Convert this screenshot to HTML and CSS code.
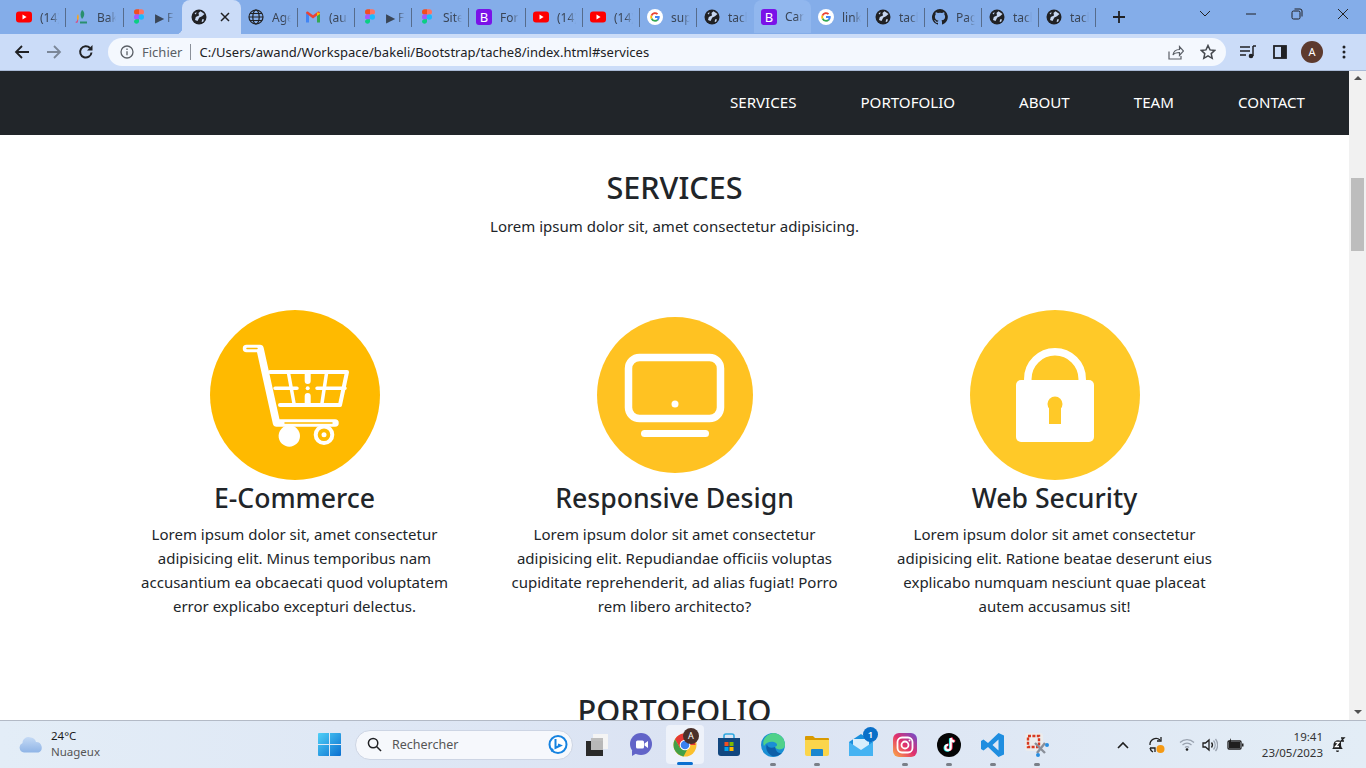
FILE: index.html
```html
<!DOCTYPE html>
<html lang="fr">
<head>
<meta charset="utf-8">
<title>tache8</title>
<link rel="stylesheet" href="styles.css">
</head>
<body>
<svg class="defs" width="0" height="0" aria-hidden="true">
  <symbol id="i-yt" viewBox="0 0 16 16"><rect y="2.5" width="16" height="11" rx="3" fill="#f00"/><path d="M6.5 5.6 10.6 8l-4.1 2.4z" fill="#fff"/></symbol>
  <symbol id="i-earth" viewBox="0 0 16 16"><circle cx="8" cy="8" r="7.5" fill="#202124"/><path d="M9.500 2.200 13.500 5 11 7.200 8.300 8.500 6.500 12 4 11 4.800 8 8 6.500 7.500 4zM3.500 4.500 5.500 3 5 5.500zM11.500 10l1.500.5-1 2.500-1.500-.5z" fill="#c6d6f0"/></symbol>
  <symbol id="i-world" viewBox="0 0 16 16"><g fill="none" stroke="#202124" stroke-width="1.2"><circle cx="8" cy="8" r="7"/><ellipse cx="8" cy="8" rx="3.2" ry="7"/><path d="M1 8h14M2 4.5h12M2 11.5h12"/></g></symbol>
  <symbol id="i-figma" viewBox="0 0 16 16"><path d="M3 3a2.7 2.7 0 0 1 2.700-2.700H8V5.700H5.700A2.700 2.700 0 0 1 3 3z" fill="#f24e1e"/><path d="M8 .3h2.300a2.700 2.700 0 0 1 0 5.400H8z" fill="#ff7262"/><path d="M3 8a2.700 2.700 0 0 1 2.700-2.700H8v5.400H5.700A2.700 2.700 0 0 1 3 8z" fill="#a259ff"/><circle cx="10.300" cy="8" r="2.700" fill="#1abcfe"/><path d="M3 13a2.700 2.700 0 0 1 2.700-2.700H8V13a2.700 2.700 0 0 1-5 0z" fill="#0acf83"/></symbol>
  <symbol id="i-gmail" viewBox="0 0 16 16"><path d="M1 13.500V4l3 2v7.500z" fill="#4285f4"/><path d="M12 13.500V6l3-2v9.500z" fill="#34a853"/><path d="M1 4.200c0-1.500 1.500-2 2.500-1.300L8 6.300l4.500-3.400c1-.7 2.500-.2 2.500 1.300L12 6.500 8 9.500 4 6.500z" fill="#ea4335"/><path d="M12 3.300l3 1V5l-3 2z" fill="#fbbc04"/></symbol>
  <symbol id="i-g" viewBox="0 0 16 16"><circle cx="8" cy="8" r="8" fill="#fff"/><path d="M12.700 8.100c0-.4 0-.7-.1-1H8v1.900h2.600a2.300 2.300 0 0 1-1 1.500l1.600 1.200c.9-.9 1.500-2.100 1.500-3.600z" fill="#4285f4"/><path d="M8 12.800c1.300 0 2.400-.4 3.200-1.200l-1.600-1.200c-.4.300-1 .5-1.600.5-1.200 0-2.300-.8-2.700-2L3.700 10.100A4.800 4.800 0 0 0 8 12.800z" fill="#34a853"/><path d="M5.300 8.900a3 3 0 0 1 0-1.800L3.700 5.900a4.800 4.800 0 0 0 0 4.200z" fill="#fbbc05"/><path d="M8 5.100c.7 0 1.300.2 1.800.7l1.400-1.400A4.800 4.800 0 0 0 3.700 5.900l1.600 1.200C5.700 5.900 6.800 5.100 8 5.100z" fill="#ea4335"/></symbol>
  <symbol id="i-gh" viewBox="0 0 16 16"><path fill="#202124" d="M8 0a8 8 0 0 0-2.500 15.600c.4.100.5-.2.500-.4v-1.400c-2.200.5-2.700-1-2.700-1-.4-.9-.9-1.200-.9-1.200-.7-.5.100-.5.100-.5.800.1 1.200.8 1.200.8.700 1.200 1.900.9 2.300.7.100-.5.300-.9.500-1.100-1.800-.2-3.600-.9-3.600-4 0-.9.300-1.600.8-2.100-.1-.2-.4-1 .1-2.100 0 0 .7-.2 2.200.8a7.600 7.600 0 0 1 4 0c1.500-1 2.200-.8 2.200-.8.400 1.100.2 1.900.1 2.100.5.600.8 1.300.8 2.100 0 3.100-1.900 3.700-3.700 3.900.3.300.6.800.6 1.500v2.200c0 .2.100.5.600.4A8 8 0 0 0 8 0z"/></symbol>
  <symbol id="i-bakeli" viewBox="0 0 16 16"><path d="M9 1c3 2 3 6 0 9-2-3-2-6 0-9z" fill="#2a8f6e"/><path d="M5 5c1 2 1 4 0 7-1.500-2-1.500-5 0-7z" fill="#f5a623"/><path d="M2 13c2 0 2-2 3-3 0 2 0 3-1 4z" fill="#e0457b"/><path d="M7 12.500h7v2H7z" fill="#2a8f6e"/></symbol>
</svg>

<div class="tabstrip">
  <div class="tab"><svg class="fav"><use href="#i-yt"/></svg><span class="tab-title">(14)</span></div>
  <div class="tab tab-wide"><svg class="fav"><use href="#i-bakeli"/></svg><span class="tab-title">Bak</span></div>
  <div class="tab tab-wide tab-nosep"><svg class="fav"><use href="#i-figma"/></svg><span class="tab-title">▶ F</span></div>
  <div class="tab tab-active"><svg class="fav"><use href="#i-earth"/></svg><svg class="tab-close" viewBox="0 0 10 10"><path d="M1 1l8 8M9 1l-8 8"/></svg></div>
  <div class="tab"><svg class="fav"><use href="#i-world"/></svg><span class="tab-title">Age</span></div>
  <div class="tab"><svg class="fav"><use href="#i-gmail"/></svg><span class="tab-title">(au</span></div>
  <div class="tab"><svg class="fav"><use href="#i-figma"/></svg><span class="tab-title">▶ F</span></div>
  <div class="tab"><svg class="fav"><use href="#i-figma"/></svg><span class="tab-title">Site</span></div>
  <div class="tab"><div class="fav fav-b">B</div><span class="tab-title">For</span></div>
  <div class="tab"><svg class="fav"><use href="#i-yt"/></svg><span class="tab-title">(14)</span></div>
  <div class="tab"><svg class="fav"><use href="#i-yt"/></svg><span class="tab-title">(14)</span></div>
  <div class="tab"><svg class="fav"><use href="#i-g"/></svg><span class="tab-title">sup</span></div>
  <div class="tab tab-nosep"><svg class="fav"><use href="#i-earth"/></svg><span class="tab-title">tach</span></div>
  <div class="tab tab-hover"><div class="fav fav-b">B</div><span class="tab-title">Car</span></div>
  <div class="tab"><svg class="fav"><use href="#i-g"/></svg><span class="tab-title">link</span></div>
  <div class="tab"><svg class="fav"><use href="#i-earth"/></svg><span class="tab-title">tach</span></div>
  <div class="tab"><svg class="fav"><use href="#i-gh"/></svg><span class="tab-title">Pag</span></div>
  <div class="tab"><svg class="fav"><use href="#i-earth"/></svg><span class="tab-title">tach</span></div>
  <div class="tab"><svg class="fav"><use href="#i-earth"/></svg><span class="tab-title">tach</span></div>
  <svg class="newtab" viewBox="0 0 12 12"><path d="M6 0v12M0 6h12"/></svg>
  <svg class="win win-chev" viewBox="0 0 12 8"><path d="M1 1l5 5 5-5"/></svg>
  <svg class="win win-min" viewBox="0 0 12 12"><path d="M1 6h10"/></svg>
  <svg class="win win-max" viewBox="0 0 12 12"><rect x="1" y="3" width="8" height="8" rx="1.500"/><path d="M3.500 1H9a2 2 0 0 1 2 2v5.500"/></svg>
  <svg class="win win-close" viewBox="0 0 12 12"><path d="M1 1l10 10M11 1L1 11"/></svg>
</div>

<div class="toolbar">
  <svg class="tool tool-back" viewBox="0 0 16 16"><path d="M15 8H2M8 2 2 8l6 6"/></svg>
  <svg class="tool tool-fwd" viewBox="0 0 16 16"><path d="M1 8h13M8 2l6 6-6 6"/></svg>
  <svg class="tool tool-reload" viewBox="0 0 16 16"><path d="M13.500 8.500A5.700 5.700 0 1 1 12 4"/><path class="solid" d="M14.500 1v5.500H9z"/></svg>
  <div class="omnibox">
    <svg class="info" viewBox="0 0 14 14"><circle cx="7" cy="7" r="6"/><path d="M7 6.200v4M7 3.400v1.500"/></svg>
    <span class="scheme">Fichier</span>
    <span class="divider"></span>
    <span class="url">C:/Users/awand/Workspace/bakeli/Bootstrap/tache8/index.html#services</span>
    <svg class="omni-ic omni-share" viewBox="0 0 16 16"><path d="M1 7.500V15h12v-3"/><path d="M5 11c.5-3.500 3-5.500 6.500-5.500V2.500L15.500 7l-4 4.500V8.500C9 8.500 6.500 9 5 11z"/></svg>
    <svg class="omni-ic omni-star" viewBox="0 0 16 16"><path d="M8 1.500l2 4.400 4.800.5-3.600 3.200 1 4.700L8 11.900l-4.200 2.400 1-4.700L1.200 6.400 6 5.900z"/></svg>
  </div>
  <svg class="tool tool-media" viewBox="0 0 16 16"><path d="M0 3h10M0 7h10M0 11h6"/><path d="M13 2v10"/><circle class="solid" cx="11" cy="12" r="2.300"/><path d="M13 2h3"/></svg>
  <svg class="tool tool-side" viewBox="0 0 14 14"><rect x="1" y="1" width="12" height="12"/><rect class="solid" x="8" y="1" width="5" height="12"/></svg>
  <div class="avatar">A</div>
  <svg class="kebab" viewBox="0 0 4 14"><circle cx="2" cy="2" r="1.500"/><circle cx="2" cy="7" r="1.500"/><circle cx="2" cy="12" r="1.500"/></svg>
</div>

<div class="viewport">
  <div class="page">
    <nav class="navbar">
      <a class="nav-link">SERVICES</a>
      <a class="nav-link">PORTOFOLIO</a>
      <a class="nav-link">ABOUT</a>
      <a class="nav-link">TEAM</a>
      <a class="nav-link">CONTACT</a>
    </nav>
    <section class="services">
      <h2 class="section-title">SERVICES</h2>
      <p class="section-sub">Lorem ipsum dolor sit, amet consectetur adipisicing.</p>
      <div class="cards">
        <article class="card">
          <div class="icon-wrap">
            <svg class="icon-disc" viewBox="0 0 170 170">
              <circle class="c-cart" cx="85" cy="85" r="85"/>
              <g class="stroke-w">
                <path class="s7" d="M36.500 38.500H50L66.500 113H125"/>
                <path class="s4" d="M60 62H137L130 95H70"/>
                <path class="s3" d="M65 78.300H87M107 78.300H135M78.300 62l6 33M116.700 62l-5 33"/>
                <path class="s6" d="M97.700 63V71M97.700 86V94"/>
                <circle class="s4" cx="114" cy="124.700" r="8.300"/>
              </g>
              <g class="stroke-cart">
                <path d="M37 38.500H47"/>
                <path d="M75 113H122"/>
              </g>
              <circle class="fill-w" cx="79.300" cy="126" r="10.700"/>
              <circle class="fill-w" cx="114" cy="124.700" r="2.500"/>
              <circle class="fill-w" cx="97.700" cy="78.300" r="2"/>
            </svg>
          </div>
          <h3 class="card-title">E-Commerce</h3>
          <p class="card-text">Lorem ipsum dolor sit, amet consectetur adipisicing elit. Minus temporibus nam accusantium ea obcaecati quod voluptatem error explicabo excepturi delectus.</p>
        </article>
        <article class="card">
          <div class="icon-wrap">
            <svg class="icon-disc icon-small" viewBox="0 0 156 156">
              <circle class="c-screen" cx="78" cy="78" r="78"/>
              <g class="stroke-w">
                <rect class="s7" x="31.500" y="40.500" width="92" height="61" rx="11"/>
              </g>
              <circle class="fill-w" cx="78" cy="87" r="3.500"/>
              <rect class="fill-w" x="44" y="113" width="68" height="7" rx="3.500"/>
            </svg>
          </div>
          <h3 class="card-title">Responsive Design</h3>
          <p class="card-text">Lorem ipsum dolor sit amet consectetur adipisicing elit. Repudiandae officiis voluptas cupiditate reprehenderit, ad alias fugiat! Porro rem libero architecto?</p>
        </article>
        <article class="card">
          <div class="icon-wrap">
            <svg class="icon-disc" viewBox="0 0 170 170">
              <circle class="c-lock" cx="85" cy="85" r="85"/>
              <g class="stroke-w"><path class="s7" d="M57.800 69A27.200 27.200 0 0 1 112.200 69V72M57.800 69V72"/></g>
              <rect class="fill-w" x="46" y="70" width="78" height="62" rx="5"/>
              <circle class="c-lock" cx="85" cy="94" r="7.500"/>
              <rect class="c-lock" x="79" y="94" width="12" height="20"/>
            </svg>
          </div>
          <h3 class="card-title">Web Security</h3>
          <p class="card-text">Lorem ipsum dolor sit amet consectetur adipisicing elit. Ratione beatae deserunt eius explicabo numquam nesciunt quae placeat autem accusamus sit!</p>
        </article>
      </div>
    </section>
    <section class="portfolio">
      <h2 class="section-title">PORTOFOLIO</h2>
    </section>
  </div>
  <div class="scrollbar">
    <span class="arrow-up"></span>
    <span class="thumb"></span>
    <span class="arrow-down"></span>
  </div>
</div>

<footer class="taskbar">
  <div class="weather">
    <svg class="cloud" viewBox="0 0 26 17"><defs><linearGradient id="gc" x1="0" y1="0" x2="0" y2="1"><stop offset="0" stop-color="#c5daf5"/><stop offset="1" stop-color="#8fb4e6"/></linearGradient></defs><path d="M6 16.500A5 5 0 0 1 4.500 7 6 6 0 0 1 13 1.500a6 6 0 0 1 5 4.500 5.500 5.500 0 0 1 2.500 10.500z" fill="url(#gc)"/></svg>
    <div class="weather-text"><span class="temp">24°C</span><span class="cond">Nuageux</span></div>
  </div>
  <svg class="winlogo" viewBox="0 0 23 23"><defs><linearGradient id="gw" x1="0" y1="0" x2="1" y2="1"><stop offset="0" stop-color="#4fd0f7"/><stop offset="1" stop-color="#0a6fd0"/></linearGradient></defs><path d="M0 1a1 1 0 0 1 1-1h10v11H0zM12 0h10a1 1 0 0 1 1 1v10H12zM0 12h11v11H1a1 1 0 0 1-1-1zM12 12h11v10a1 1 0 0 1-1 1H12z" fill="url(#gw)"/></svg>
  <div class="search">
    <svg class="search-ic" viewBox="0 0 16 16"><circle cx="6.500" cy="6.500" r="5"/><path d="M10.200 10.200 15 15"/></svg>
    <span class="search-text">Rechercher</span>
    <svg class="bing" viewBox="0 0 20 20"><circle cx="10" cy="9.500" r="8.500" fill="#fff" stroke="#1683e0" stroke-width="2"/><path d="M7.500 4v9l5-2.500-2.500-1" fill="none" stroke="#1683e0" stroke-width="2"/><path d="M3 17l3-2-2-2z" fill="#1683e0"/></svg>
  </div>
  <div class="dock">
    <div class="dock-item"><svg class="dock-ic" viewBox="0 0 24 24"><rect x="8" y="1" width="15" height="15" fill="#f4f4f4"/><rect x="6" y="5" width="12" height="12" fill="#bdbdbd"/><rect x="1" y="8" width="17" height="15" fill="#2a2a2a"/><rect x="6" y="8" width="12" height="9" fill="#b8b8b8"/></svg></div>
    <div class="dock-item"><svg class="dock-ic" viewBox="0 0 24 24"><circle cx="12" cy="11" r="11" fill="#6264c8"/><path d="M3 17v6l5-3z" fill="#6264c8"/><rect x="7" y="7.500" width="8" height="8" rx="1.500" fill="#fff"/><path d="M15.500 10.500 19 8v7l-3.500-2.500z" fill="#fff"/></svg></div>
    <div class="dock-item dock-active">
      <svg class="dock-ic" viewBox="0 0 24 24"><circle cx="12" cy="12" r="11.500" fill="#fbc02d"/><path d="M12 .5A11.500 11.500 0 0 0 2 6.300L7 15l5-3h10.500A11.500 11.500 0 0 0 12 .5z" fill="#e53935"/><path d="M2 6.300A11.500 11.500 0 0 0 10.500 23.400L15 15 7 15z" fill="#43a047"/><circle cx="12" cy="12" r="5.300" fill="#fff"/><circle cx="12" cy="12" r="4.300" fill="#3b82f0"/></svg>
      <span class="chrome-badge">A</span><span class="pill"></span>
    </div>
    <div class="dock-item"><svg class="dock-ic" viewBox="0 0 24 24"><path d="M7 6V3a2 2 0 0 1 2-2h6a2 2 0 0 1 2 2v3" fill="none" stroke="#2fa8e0" stroke-width="1.600"/><path d="M1 5h22v15a3 3 0 0 1-3 3H4a3 3 0 0 1-3-3z" fill="#12477f"/><rect x="7.500" y="9" width="4" height="4" fill="#f25022"/><rect x="12.500" y="9" width="4" height="4" fill="#7fba00"/><rect x="7.500" y="14" width="4" height="4" fill="#00a4ef"/><rect x="12.500" y="14" width="4" height="4" fill="#ffb900"/></svg></div>
    <div class="dock-item has-dot"><svg class="dock-ic" viewBox="0 0 24 24"><circle cx="12" cy="12" r="12" fill="#1a8fd4"/><path d="M12 0a12 12 0 0 1 12 12c0 2-1 3-3 4-3 1-6 0-7-2 2-1 3-2 1-4C12 8 6 8 3 13 1 9 3 2 12 0z" fill="#4fd18a"/><path d="M14 14c-4 2-8 0-8-3-2 4 0 9 5 12 4 1 8-1 10-3-3 1-6-1-7-6z" fill="#0d5fa8"/></svg></div>
    <div class="dock-item has-dot"><svg class="dock-ic" viewBox="0 0 24 24"><path d="M0 4a1 1 0 0 1 1-1h7l2 2h13a1 1 0 0 1 1 1v4H0z" fill="#d99a00"/><path d="M0 7h24v14a2 2 0 0 1-2 2H2a2 2 0 0 1-2-2z" fill="#fbd54b"/><path d="M6 17a1 1 0 0 1 1-1h10a1 1 0 0 1 1 1v6H6z" fill="#1a86d0"/></svg></div>
    <div class="dock-item"><svg class="dock-ic" viewBox="0 0 24 24"><path d="M0 9 12 1l12 8v14H0z" fill="#1a8fdc"/><path d="M4 6h16v8l-8 4-8-4z" fill="#d8eefc"/><path d="M0 9l12 8 12-8v14H0z" fill="#45b3f2"/></svg><span class="mail-badge">1</span></div>
    <div class="dock-item has-dot"><svg class="dock-ic" viewBox="0 0 24 24"><defs><linearGradient id="gi" x1="0" y1="1" x2="1" y2="0"><stop offset="0" stop-color="#fdb045"/><stop offset=".5" stop-color="#e1306c"/><stop offset="1" stop-color="#6a4fd0"/></linearGradient></defs><rect width="24" height="24" rx="6" fill="url(#gi)"/><rect x="4.500" y="4.500" width="15" height="15" rx="4.500" fill="none" stroke="#fff" stroke-width="1.800"/><circle cx="12" cy="12" r="3.500" fill="none" stroke="#fff" stroke-width="1.800"/><circle cx="16.500" cy="7.500" r="1" fill="#fff"/></svg></div>
    <div class="dock-item has-dot"><svg class="dock-ic" viewBox="0 0 24 24"><circle cx="12" cy="12" r="12" fill="#050505"/><path d="M13.800 5v9.500a2.700 2.700 0 1 1-2.700-2.700" fill="none" stroke="#25f4ee" stroke-width="2.200" transform="translate(-.8 .5)"/><path d="M13.800 5c.3 2 1.500 3.300 3.600 3.500" fill="none" stroke="#25f4ee" stroke-width="2.200" transform="translate(-.8 .5)"/><path d="M13.800 5v9.500a2.700 2.700 0 1 1-2.700-2.700" fill="none" stroke="#fe2c55" stroke-width="2.200" transform="translate(.8 -.3)"/><path d="M13.800 5c.3 2 1.500 3.300 3.600 3.500" fill="none" stroke="#fe2c55" stroke-width="2.200" transform="translate(.8 -.3)"/><path d="M13.800 5v9.500a2.700 2.700 0 1 1-2.700-2.700M13.800 5c.3 2 1.500 3.300 3.600 3.500" fill="none" stroke="#fff" stroke-width="2"/></svg></div>
    <div class="dock-item has-dot"><svg class="dock-ic" viewBox="0 0 24 24"><path d="M17.500 0 23 2.500v19L17.500 24 7 14l-4.500 3.500L0 16v-8l2.500-1.500L7 10zM17.500 6.500 11.500 12l6 5.500z" fill="#1f8ee0"/></svg></div>
    <div class="dock-item has-dot"><svg class="dock-ic" viewBox="0 0 24 24"><rect x="0" y="0" width="18" height="18" rx="3" fill="#ececec"/><rect x="3" y="3" width="11" height="11" fill="none" stroke="#d8391f" stroke-width="2.400" stroke-dasharray="3 1.400"/><path d="M10 10l10 10M20 10 12 20" stroke="#8a8f99" stroke-width="2.400"/><circle cx="22" cy="12" r="2" fill="#2a8ee0"/><circle cx="13" cy="22" r="2" fill="#2a8ee0"/></svg></div>
  </div>
  <div class="tray">
    <svg class="tray-ic tray-chev" viewBox="0 0 12 8"><path d="M1 7l5-5 5 5"/></svg>
    <svg class="tray-ic tray-sync" viewBox="0 0 17 18"><path d="M2 9a6 6 0 0 1 10-5"/><path d="M13 1v4H9"/><path d="M2 12h5v4"/><path d="M2 12a6 6 0 0 0 3 4"/><circle class="orange" cx="12.500" cy="13" r="4"/></svg>
    <svg class="tray-ic tray-wifi" viewBox="0 0 16 13"><path class="faint" d="M1 4.500a10 10 0 0 1 14 0"/><path class="faint" d="M3.500 7a6.500 6.500 0 0 1 9 0"/><path class="faint" d="M6 9.500a3 3 0 0 1 4 0"/><circle class="solid-d" cx="8" cy="11.500" r="1.300"/></svg>
    <svg class="tray-ic tray-vol" viewBox="0 0 16 14"><path d="M1 5v4h2.500L7 12V2L3.500 5z"/><path d="M9.500 4.500a4 4 0 0 1 0 5"/><path class="faint" d="M11.500 2.500a7 7 0 0 1 0 9"/><path class="faint" d="M13.500 1a9.500 9.500 0 0 1 0 12"/></svg>
    <svg class="tray-ic tray-bat" viewBox="0 0 17 13"><rect x="1" y="3" width="13" height="8" rx="1"/><path class="solid-d" d="M2 4h11v6H2z"/><path class="solid-d" d="M15 5.500h1.500v3H15z"/><path class="solid-d" d="M4 0 2 4h2z"/></svg>
    <div class="clock"><span>19:41</span><span>23/05/2023</span></div>
    <svg class="tray-ic tray-bell" viewBox="0 0 16 16"><path class="solid-d" d="M2 12c1.500-1 1.500-2.500 1.500-5A4.500 4.500 0 0 1 11 4.500v2.500c0 2.500.5 4 2 5z"/><path class="solid-d" d="M6 13.500h3a1.500 1.500 0 0 1-3 0z"/><path class="white" d="M5.500 5.500h3.500l-3.500 4h3.500"/><path d="M11 1h3l-3 3h3"/></svg>
  </div>
</footer>
</body>
</html>
```

FILE: styles.css
```css
* { box-sizing: border-box; }
html, body { margin: 0; height: 100%; }
body {
  width: 1366px;
  height: 768px;
  overflow: hidden;
  display: flex;
  flex-direction: column;
  font-family: "Noto Sans", "Open Sans", sans-serif;
  color: #212529;
  background: #fff;
}
.defs { position: absolute; }

/* tab strip */
.tabstrip {
  height: 34px;
  flex: none;
  display: flex;
  align-items: stretch;
  padding-left: 9px;
  background: #84ade9;
}
.tab {
  position: relative;
  width: 57px;
  flex: none;
  display: flex;
  align-items: center;
  gap: 8px;
  padding-left: 7px;
  font-size: 12px;
  color: #3a4556;
}
.tab::after {
  content: "";
  position: absolute;
  right: 0;
  top: 8px;
  width: 1px;
  height: 19px;
  background: #566c8c;
}
.tab-wide { width: 58px; }
.tab-nosep::after, .tab-active::after, .tab-hover::after { display: none; }
.tab-active {
  width: 59px;
  padding-left: 9px;
  background: #cbdcf8;
  border-radius: 8px 8px 0 0;
  gap: 13px;
}
.tab-active::before {
  content: "";
  position: absolute;
  left: -6px;
  bottom: 0;
  width: 6px;
  height: 6px;
  background: radial-gradient(circle at 0 0, transparent 6px, #cbdcf8 6.5px);
}
.tab-hover {
  background: #91b7ee;
  border-radius: 8px 8px 0 0;
  height: 33px;
}
.fav { width: 16px; height: 16px; flex: none; }
.fav-b {
  border-radius: 3px;
  background: #7a12e8;
  color: #fff;
  font-size: 13px;
  font-weight: 400;
  line-height: 16px;
  text-align: center;
}
.tab-title {
  width: 19px;
  flex: none;
  overflow: hidden;
  white-space: nowrap;
  -webkit-mask-image: linear-gradient(90deg, #000 60%, transparent);
  mask-image: linear-gradient(90deg, #000 60%, transparent);
}
.tab-close { width: 10px; height: 10px; fill: none; stroke: #202124; stroke-width: 1.500; }
.newtab {
  width: 12px;
  height: 12px;
  margin: 11px 0 0 16.500px;
  fill: none;
  stroke: #202124;
  stroke-width: 1.800;
  flex: none;
}
.win { flex: none; fill: none; stroke: #202124; stroke-width: 1; width: 12px; height: 12px; }
.win-chev { height: 8px; margin: 10px 0 0 74px; }
.win-min { margin: 8px 0 0 34px; }
.win-max { margin: 8px 0 0 34px; }
.win-close { margin: 8px 0 0 34px; }

/* toolbar */
.toolbar {
  height: 37px;
  flex: none;
  display: flex;
  align-items: center;
  background: #cbdcf8;
  border-bottom: 1px solid #a9bad6;
  padding: 0 0 1px 14px;
}
.tool { flex: none; fill: none; stroke: #202124; stroke-width: 1.800; }
.tool .solid { fill: #202124; stroke: none; }
.tool-back { width: 16px; height: 16px; }
.tool-fwd { width: 16px; height: 16px; margin-left: 16px; stroke: #7b8798; }
.tool-reload { width: 16px; height: 16px; margin-left: 16px; stroke-width: 2; }
.omnibox {
  width: 1118px;
  height: 28px;
  margin-left: 14px;
  flex: none;
  display: flex;
  align-items: center;
  border-radius: 14px;
  background: #f4f8fe;
  padding-left: 12px;
  font-size: 13px;
}
.info { width: 14px; height: 14px; flex: none; fill: none; stroke: #5a5f66; stroke-width: 1.300; }
.scheme { margin-left: 8px; color: #5a5f66; }
.divider { width: 1px; height: 16px; margin: 0 8px 0 8px; background: #8a9099; }
.url { color: #202124; flex: 1; white-space: nowrap; letter-spacing: .03px; }
.omni-ic { width: 16px; height: 16px; flex: none; fill: none; stroke: #5a5f66; stroke-width: 1.200; }
.omni-star { margin: 0 10px 0 16px; stroke-width: 1.500; stroke: #45494f; }
.tool-media { width: 16px; height: 16px; margin-left: 14px; stroke-width: 1.500; }
.tool-side { width: 14px; height: 14px; margin-left: 17px; stroke-width: 1.800; }
.avatar {
  width: 22px;
  height: 22px;
  margin-left: 14px;
  flex: none;
  border-radius: 50%;
  background: #5d3a2e;
  color: #fff;
  font-size: 11px;
  line-height: 22px;
  text-align: center;
}
.kebab { width: 4px; height: 14px; margin-left: 19px; flex: none; fill: #202124; }

/* page */
.viewport {
  flex: 1;
  min-height: 0;
  display: flex;
}
.page { flex: 1; min-width: 0; overflow: hidden; }
.navbar {
  height: 64px;
  display: flex;
  align-items: center;
  justify-content: flex-end;
  gap: 64px;
  padding: 0 44px 2px 0;
  background: #212529;
}
.nav-link { color: #fff; font-size: 15.100px; line-height: 24px; }
.services { padding-top: 28px; text-align: center; }
.section-title {
  margin: 0;
  font-size: 30.600px;
  line-height: 48px;
  font-weight: 500;
}
.section-sub { margin: 3px 0 0; font-size: 15px; line-height: 24px; }
.cards {
  width: 1140px;
  margin: 72px auto 0;
  display: grid;
  grid-template-columns: repeat(3, 1fr);
}
.card { padding: 0 25px; }
.icon-wrap { height: 170px; display: flex; align-items: center; justify-content: center; }
.icon-disc { width: 170px; height: 170px; display: block; }
.icon-small { width: 156px; height: 156px; }
.c-cart { fill: #ffba00; }
.c-screen { fill: #ffc222; }
.c-lock { fill: #ffc928; }
.fill-w { fill: #fff; }
.stroke-w { fill: none; stroke: #fff; stroke-linecap: round; stroke-linejoin: round; }
.stroke-cart { fill: none; stroke: #ffba00; stroke-width: 1.500; stroke-linecap: round; }
.s3 { stroke-width: 3.500; }
.s4 { stroke-width: 4; }
.s5 { stroke-width: 5; }
.s6 { stroke-width: 6; }
.s7 { stroke-width: 7.500; }
.card-title {
  margin: 0;
  font-size: 26.600px;
  line-height: 36px;
  font-weight: 500;
}
.card-text { margin: 6px 0 0; font-size: 15px; line-height: 24px; }
.portfolio { padding-top: 68px; text-align: center; }

/* scrollbar */
.scrollbar {
  width: 17px;
  flex: none;
  display: flex;
  flex-direction: column;
  align-items: center;
  background: #f1f1f1;
  padding-top: 5px;
}
.arrow-up, .arrow-down { width: 0; height: 0; border-left: 4px solid transparent; border-right: 4px solid transparent; }
.arrow-up { border-bottom: 4px solid #505050; }
.thumb { width: 13px; height: 73px; margin-top: 98px; background: #bdbdbd; }
.arrow-down { margin-top: auto; margin-bottom: 6px; border-top: 4px solid #505050; }

/* taskbar */
.taskbar {
  height: 48px;
  flex: none;
  display: flex;
  align-items: center;
  background: linear-gradient(90deg, #e3edf7, #dbe3f3 50%, #e3edf6);
  border-top: 1px solid #b3bac6;
}
.weather { width: 318px; flex: none; display: flex; align-items: center; gap: 7px; padding-left: 18px; }
.cloud { width: 26px; height: 17px; flex: none; }
.weather-text { display: flex; flex-direction: column; font-size: 11.500px; line-height: 16px; margin-top: -1px; }
.temp { color: #1a1a1a; }
.cond { color: #555; }
.winlogo { width: 23px; height: 23px; flex: none; }
.search {
  width: 218px;
  height: 30px;
  margin-left: 14px;
  flex: none;
  display: flex;
  align-items: center;
  padding-left: 11px;
  border-radius: 15px;
  background: #f6f8fc;
  border: 1px solid #cdd5e4;
  font-size: 12.500px;
  color: #555;
}
.search-ic { width: 15px; height: 15px; flex: none; fill: none; stroke: #202124; stroke-width: 1.600; }
.search-text { margin-left: 10px; flex: 1; }
.bing { width: 20px; height: 20px; margin-right: 4px; flex: none; }
.dock { width: 484px; margin-left: 2px; flex: none; display: flex; align-items: stretch; height: 47px; }
.dock-item {
  position: relative;
  width: 44px;
  flex: none;
  display: flex;
  align-items: center;
  justify-content: center;
}
.dock-ic { width: 24px; height: 24px; display: block; }
.has-dot::after {
  content: "";
  position: absolute;
  left: 19px;
  bottom: 2px;
  width: 6px;
  height: 3px;
  border-radius: 2px;
  background: #7a7f88;
}
.dock-active::before {
  content: "";
  position: absolute;
  left: 3px;
  top: 4px;
  width: 38px;
  height: 39px;
  border-radius: 4px;
  background: #eef2fa;
}
.dock-active .dock-ic { position: relative; }
.pill { position: absolute; left: 14px; bottom: 3px; width: 16px; height: 3px; border-radius: 2px; background: #0a6fd0; }
.chrome-badge {
  position: absolute;
  left: 20px;
  top: 7px;
  width: 16px;
  height: 16px;
  border-radius: 50%;
  background: #4a302a;
  color: #fff;
  font-size: 9px;
  line-height: 16px;
  text-align: center;
}
.mail-badge {
  position: absolute;
  left: 24px;
  top: 6px;
  width: 15px;
  height: 15px;
  border-radius: 50%;
  background: #0a6fc8;
  color: #fff;
  font-size: 9.500px;
  font-weight: 600;
  line-height: 15px;
  text-align: center;
}
.tray { flex: 1; display: flex; align-items: center; padding-left: 58px; }
.tray-ic { flex: none; fill: none; stroke: #1f1f1f; stroke-width: 1.300; }
.tray-ic .faint { stroke: #9aa3b0; }
.tray-ic .orange { fill: #f59a14; stroke: none; }
.tray-ic .solid-d { fill: #1f1f1f; stroke: none; }
.tray-ic .white { stroke: #fff; }
.tray-chev { width: 12px; height: 8px; stroke-width: 1.600; }
.tray-sync { width: 17px; height: 18px; margin-left: 19px; }
.tray-wifi { width: 16px; height: 13px; margin-left: 14px; }
.tray-vol { width: 16px; height: 14px; margin-left: 7px; }
.tray-bat { width: 17px; height: 13px; margin-left: 9px; }
.clock {
  display: flex;
  flex-direction: column;
  align-items: flex-end;
  width: 74px;
  margin-left: 5px;
  font-size: 11.500px;
  line-height: 16px;
  color: #333;
}
.tray-bell { width: 16px; height: 16px; margin-left: 7px; }
```
